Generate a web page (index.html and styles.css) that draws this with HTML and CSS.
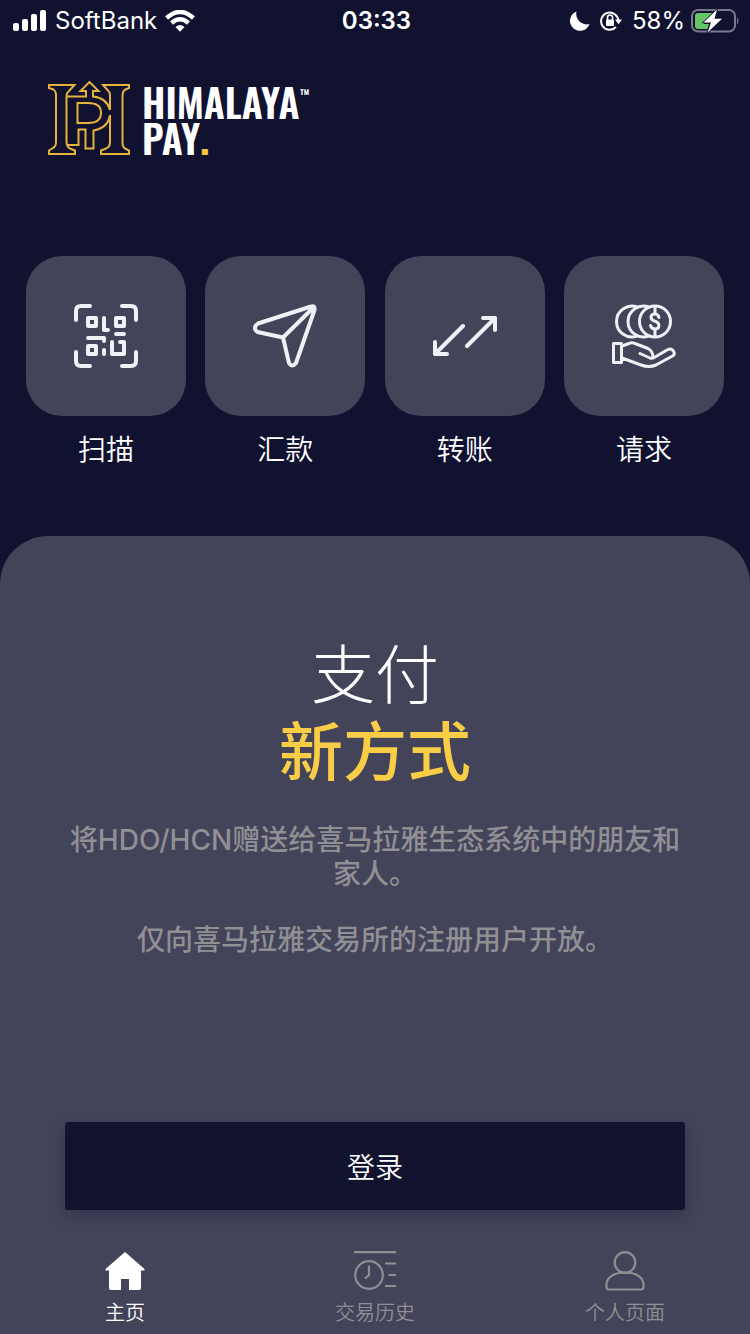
FILE: index.html
```html
<!DOCTYPE html>
<html lang="zh-CN">
<head>
<meta charset="utf-8">
<meta name="viewport" content="width=device-width, initial-scale=1">
<title>Himalaya Pay</title>
<link rel="stylesheet" href="styles.css">
</head>
<body>
<div class="app">
  <div class="status">
    <div class="status-group">
      <svg width="34" height="22" viewBox="0 0 34 22" fill="#fff" aria-hidden="true"><rect x="0" y="13" width="6" height="8" rx="2"/><rect x="9" y="9" width="6" height="12" rx="2"/><rect x="18" y="4" width="6" height="17" rx="2"/><rect x="27" y="0" width="6" height="21" rx="2"/></svg>
      <span class="carrier">SoftBank</span>
      <svg width="30" height="22" viewBox="0 0 30 22" aria-hidden="true"><g fill="none" stroke="#fff" stroke-width="4.4"><path d="M1.6 8Q15-4 28.4 8"/><path d="M6.5 13Q15 5.500 23.500 13"/></g><path d="M10.500 17Q15 13 19.500 17L15 21.800Z" fill="#fff"/></svg>
    </div>
    <time class="clock">03:33</time>
    <div class="status-group status-right">
      <svg width="20" height="20" viewBox="0 0 20 20" aria-hidden="true"><path d="M6.500.500A10 10 0 1 0 19.500 13A10.500 10.500 0 0 1 6.500.500Z" fill="#fff"/></svg>
      <svg width="22" height="22" viewBox="0 0 22 22" aria-hidden="true"><path d="M18.300 11A8.600 8.600 0 1 0 16 17" fill="none" stroke="#fff" stroke-width="2"/><path d="M15 9.500h7l-3.500 4.800Z" fill="#fff"/><rect x="6" y="9.500" width="8" height="6.500" rx="1" fill="#fff"/><path d="M7.500 10V7.500a2.500 2.500 0 0 1 5 0V10" fill="none" stroke="#fff" stroke-width="1.600"/></svg>
      <span class="percent">58%</span>
      <svg class="battery" width="49" height="24" viewBox="0 0 49 24" aria-hidden="true"><rect x="1" y="1" width="43" height="21.500" rx="6" fill="none" stroke="#78798b" stroke-width="2"/><path d="M46 8q3 4 0 8Z" fill="#78798b"/><path d="M7 4H22L13 13.500V15H18L16.500 20H7Q4 20 4 17V7Q4 4 7 4Z" fill="#65c466"/><path d="M26 .500L12.500 13.500H20L16.500 23.500L31 9.800H23.500Z" fill="#fff" stroke="#11132f" stroke-width="1.500" paint-order="stroke"/></svg>
    </div>
  </div>

  <header class="brand">
    <svg class="mark" width="82" height="74" viewBox="0 0 82 74" fill="none" stroke="#e6b33d" stroke-width="2" aria-hidden="true">
      <path d="M1 4H26.500L20.500 10.500Q18.500 12 18.500 15V60Q18.500 66 22 67.500L27 69.500V73H1V69.500L5 67Q8 65.500 8 61V15Q8 10 5.500 8.500L1 7Z"/>
      <path d="M62 34V61Q62 66 58 67.500L53 69.500V73H81V69.500L77 67.500Q74.500 66 74.500 61V15Q74.500 10 77.500 8.500L81 7V4H55L60 9.500Q62 11 62 14V29"/>
      <path d="M18.500 15.500H38V10H32.500L41.500 1L50.500 10H45V15.500Q59 17 62 29M62 34Q60 47 45.500 49.500V67.500H37.500V48.500H30.500V64H20"/>
      <path d="M29.500 22H40Q53 22 53 31.500Q53 42 40 42H29.500Z"/>
    </svg>
    <div class="wordmark"><span>HIMALAYA<sup>™</sup></span><span>PAY<b>.</b></span></div>
  </header>

  <nav class="actions" aria-label="快捷功能">
    <button class="action" type="button">
      <span class="tile"><svg width="64" height="64" viewBox="0 0 64 64" aria-hidden="true"><g class="line"><path d="M2 16V7Q2 2 7 2H16M48 2H57Q62 2 62 7V16M62 48V57Q62 62 57 62H48M16 62H7Q2 62 2 57V48"/><path d="M14 14h8v8h-8zM42 14h8v8h-8zM14 42h8v8h-8zM30 14V26H34M42 30H50M14 34H30V37M30 46V50M38 38V50H50V38H46"/></g></svg></span>
      <span>扫描</span>
    </button>
    <button class="action" type="button">
      <span class="tile"><svg width="64" height="64" viewBox="0 0 64 64" aria-hidden="true"><path class="line" d="M58 2.500L5 19.500Q-1 24 4.500 28L30 33.500L36 59Q39 64 43 59L61.500 6Q62 1 58 2.500ZM60 4L30 33.500"/></svg></span>
      <span>汇款</span>
    </button>
    <button class="action" type="button">
      <span class="tile"><svg width="64" height="64" viewBox="0 0 64 64" aria-hidden="true"><path class="line" d="M30 22L2 50M2 38V50H14M34 42L62 14M50 14H62V26"/></svg></span>
      <span>转账</span>
    </button>
    <button class="action" type="button">
      <span class="tile"><svg width="64" height="64" viewBox="0 0 64 64" aria-hidden="true"><g class="line fine"><circle cx="43" cy="17.500" r="15.500"/><path d="M37.250 3.100A15.500 15.500 0 1 0 37.250 31.900M25.750 3.100A15.500 15.500 0 1 0 25.750 31.900"/><path d="M47 13.500Q46 10 43 10C38 10 37.500 15.500 42.500 17C48.500 18.500 48 25 43 25Q39.500 25 38.500 21.500M43 2.500V9.500M43 25.500V32"/><path d="M1.500 39.500h8v19h-8zM10 42L17 39.500Q20 38 23 39.500L36 44.500Q41 47 41 53.500M28 49.500L38 54Q40 55 43 53L55 46Q60 43.500 62 48Q63 50.500 60.500 52L44 61Q37 64 29 61L10 54"/></g></svg></span>
      <span>请求</span>
    </button>
  </nav>

  <main class="panel">
    <h1 class="title"><span>支付</span><strong>新方式</strong></h1>
    <div class="copy">
      <p>将HDO/HCN赠送给喜马拉雅生态系统中的朋友和家人。</p>
      <p>仅向喜马拉雅交易所的注册用户开放。</p>
    </div>
    <button class="login" type="button">登录</button>
    <nav class="tabs" aria-label="主导航">
      <a class="tab active" href="#home" aria-current="page">
        <svg width="40" height="40" viewBox="0 0 40 40" aria-hidden="true"><path d="M20 1L39.500 18V19.500H36V37Q36 39 34 39H24V28H16V39H6Q4 39 4 37V19.500H.500V18Z" fill="currentColor"/></svg>
        <span>主页</span>
      </a>
      <a class="tab" href="#history">
        <svg width="42" height="40" viewBox="0 0 42 40" fill="none" stroke="currentColor" stroke-width="2.200" aria-hidden="true"><path d="M0 1.200H42M31 12.500H42M34.500 24H42M31 35H42M15 14.500V24L11 27.500"/><circle cx="15" cy="24" r="13.800"/></svg>
        <span>交易历史</span>
      </a>
      <a class="tab" href="#profile">
        <svg width="40" height="40" viewBox="0 0 40 40" fill="none" stroke="currentColor" stroke-width="2.200" aria-hidden="true"><circle cx="20" cy="11.500" r="10.300"/><path d="M20 21.500C8 21.500 1.500 27 1.500 33.500V36Q1.500 38.500 4 38.500H36Q38.500 38.500 38.500 36V33.500C38.500 27 32 21.500 20 21.500Z"/></svg>
        <span>个人页面</span>
      </a>
    </nav>
  </main>
</div>
</body>
</html>
```
FILE: styles.css
```css
* { box-sizing: border-box; }

body {
  margin: 0;
  background: #101230;
  color: #fff;
  font-family: Inter, "Noto Sans CJK SC", sans-serif;
}

svg { display: block; flex: none; }
button { font: inherit; color: inherit; border: 0; padding: 0; cursor: pointer; }

.app { min-height: 100vh; display: flex; flex-direction: column; }

.status {
  display: grid;
  grid-template-columns: 1fr auto 1fr;
  align-items: center;
  height: 40px;
  padding: 0 10px 0 13px;
  font-size: 24px;
  line-height: 40px;
}
.status-group { display: flex; align-items: center; gap: 8px; }
.status-right { justify-content: flex-end; gap: 10px; }
.percent { margin-right: -4px; }
.carrier, .percent, .clock { padding-top: 1px; }
.clock { font-weight: 600; }

.brand { display: flex; gap: 12px; padding: 41px 48px 0; height: 216px; }
.wordmark {
  display: flex;
  flex-direction: column;
  padding-top: 2px;
  font-family: Oswald, "Roboto Condensed", "Liberation Sans Narrow", Roboto, sans-serif;
  font-weight: 600;
  font-size: 39px;
  line-height: 36px;
}
.wordmark sup { font-size: 12px; line-height: 12px; vertical-align: 20px; }
.wordmark b { color: #f8c63d; }

.actions { display: flex; justify-content: space-between; padding: 0 26px; }
.action {
  display: flex;
  flex-direction: column;
  align-items: center;
  gap: 12px;
  background: none;
  font-size: 28px;
  line-height: 44px;
  font-weight: 350;
}
.tile {
  display: grid;
  place-items: center;
  width: 160px;
  height: 160px;
  border-radius: 36px;
  background: #434359;
}
.line {
  fill: none;
  stroke: #eef1f5;
  stroke-width: 4;
  stroke-linecap: round;
  stroke-linejoin: round;
}
.fine { stroke-width: 3; }

.panel {
  flex: 1;
  display: flex;
  flex-direction: column;
  margin-top: 64px;
  padding-top: 100px;
  border-radius: 48px 48px 0 0;
  background: #434359;
}
.title {
  display: flex;
  flex-direction: column;
  align-items: center;
  margin: 0;
  font-size: 64px;
  line-height: 77px;
  font-weight: 300;
}
.title strong { color: #f9ce46; font-weight: 500; }
.copy {
  padding: 33px 62px 0;
  color: #8f8f94;
  font-size: 28px;
  line-height: 34px;
  font-weight: 500;
  text-align: center;
}
.copy p { margin: 0 0 32px; }

.login {
  height: 88px;
  margin: auto 65px 0;
  border-radius: 3px;
  background: #11132f;
  box-shadow: 0 6px 16px rgba(17, 19, 47, 0.3);
  font-size: 28px;
  font-weight: 350;
}

.tabs { display: grid; grid-template-columns: repeat(3, 1fr); padding: 41px 0 5px; }
.tab {
  display: flex;
  flex-direction: column;
  align-items: center;
  gap: 6px;
  color: #8f8f94;
  text-decoration: none;
  font-size: 20px;
  line-height: 32px;
  font-weight: 350;
}
.tab.active { color: #fff; }
```
